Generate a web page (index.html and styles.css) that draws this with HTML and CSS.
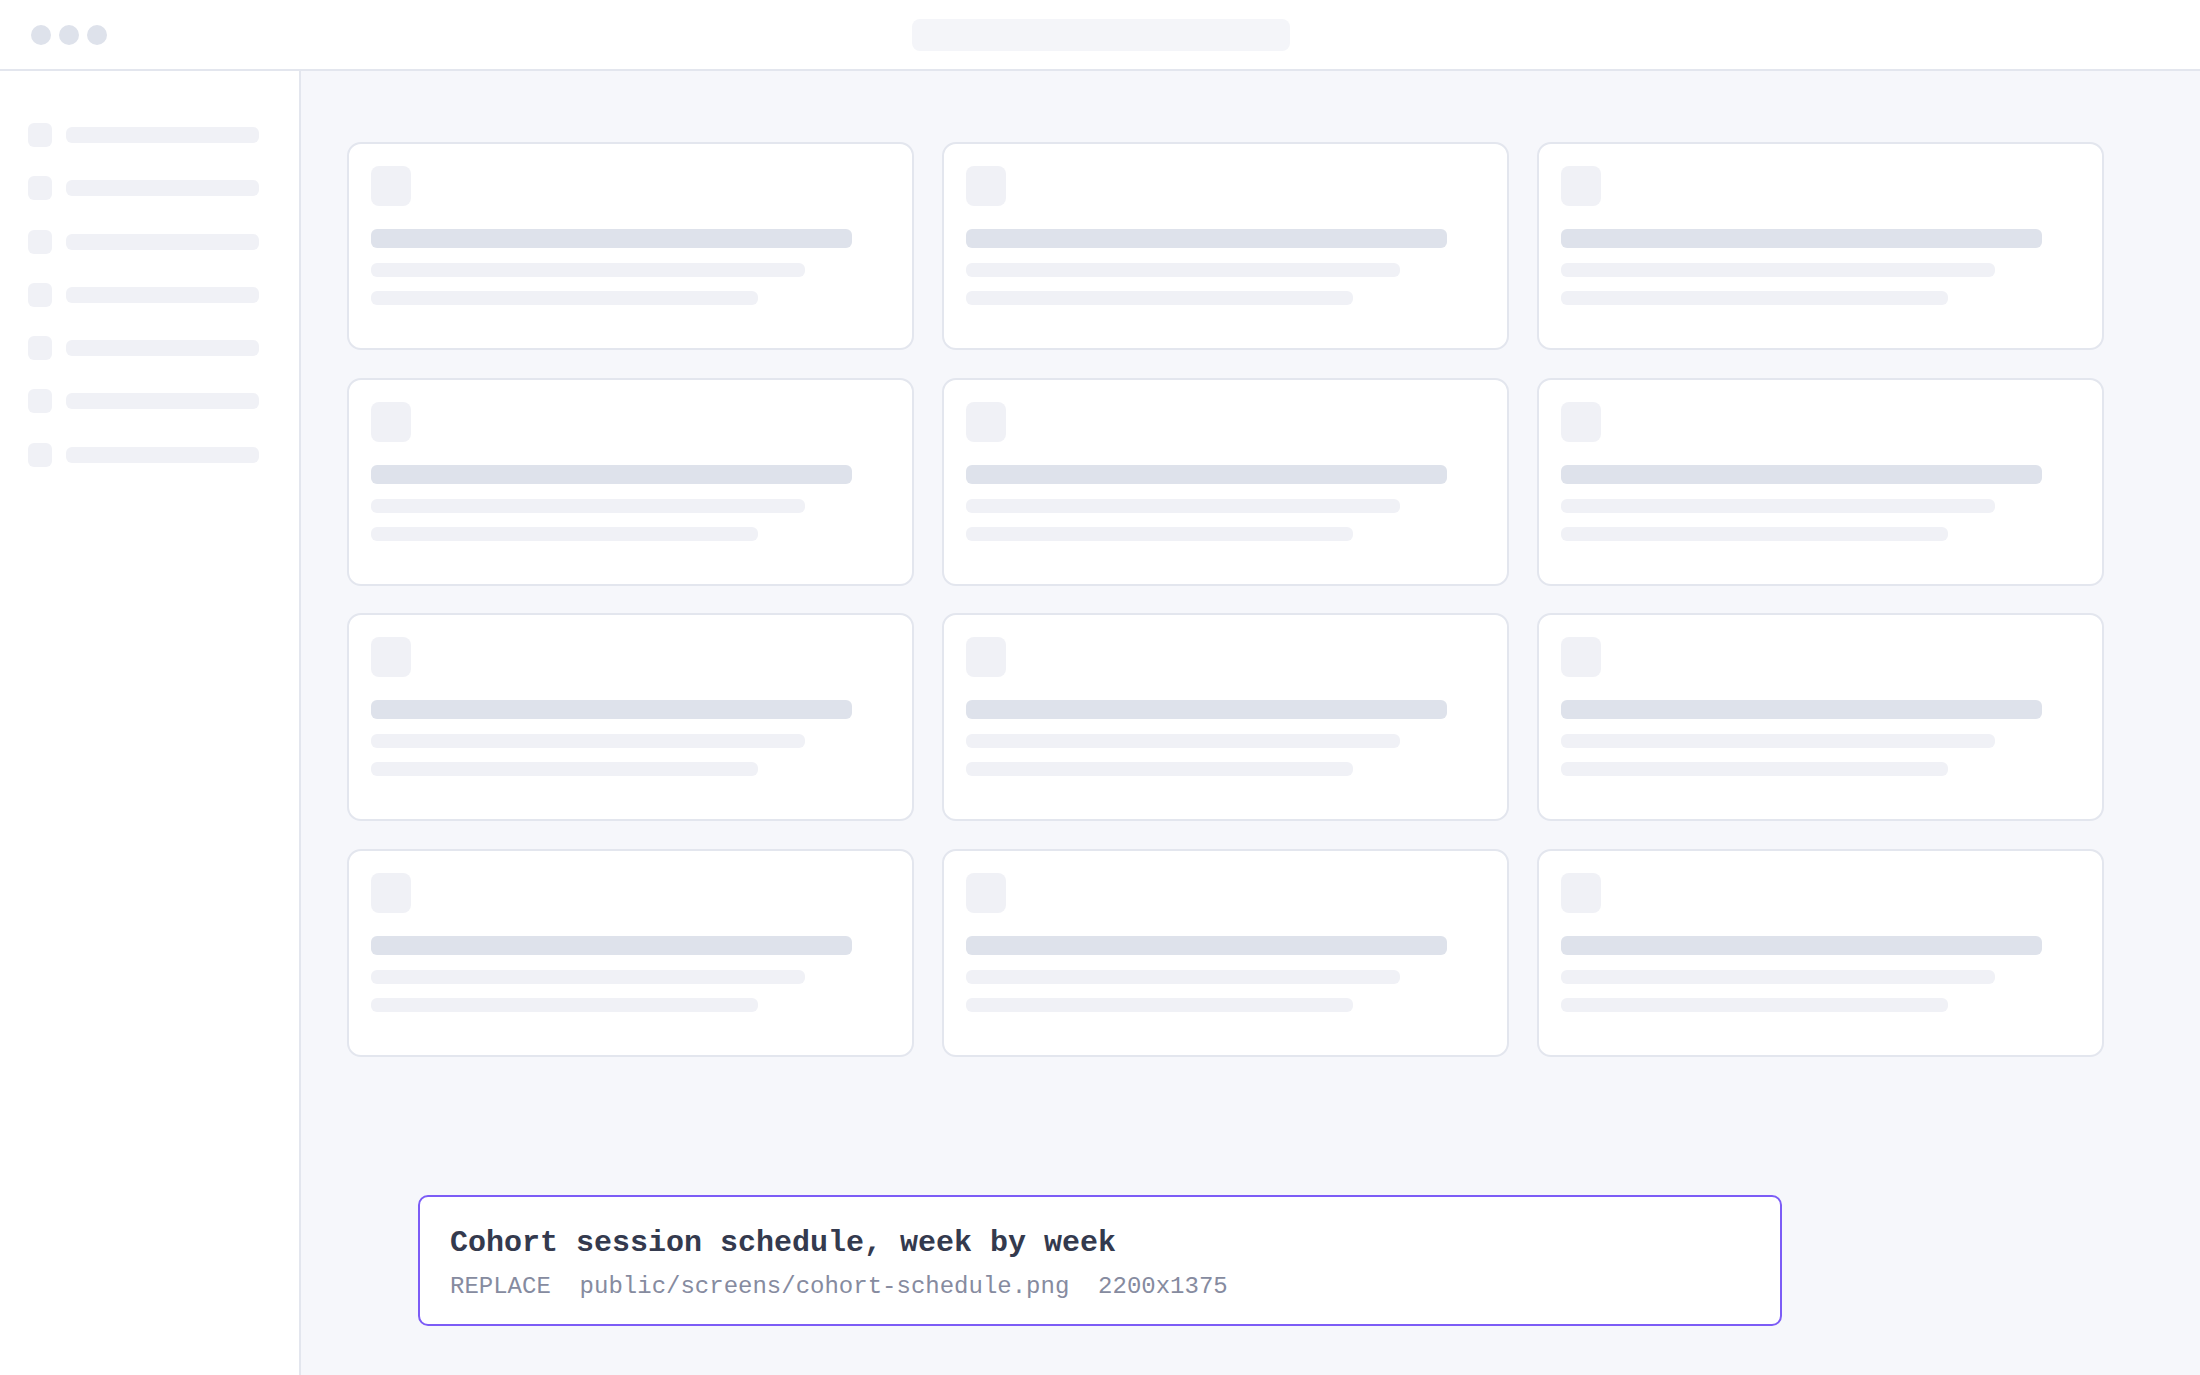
FILE: index.html
```html
<!DOCTYPE html>
<html lang="en">
<head>
  <meta charset="UTF-8">
  <title>Cohort session schedule</title>
  <link rel="stylesheet" href="styles.css">
</head>
<body>
  <header class="topbar">
    <div class="window-dots">
      <span class="dot"></span>
      <span class="dot"></span>
      <span class="dot"></span>
    </div>
    <div class="url-bar"></div>
    <div></div>
  </header>

  <div class="layout">
    <aside class="sidebar">
      <div class="nav-item"><span class="nav-icon"></span><span class="nav-label"></span></div>
      <div class="nav-item"><span class="nav-icon"></span><span class="nav-label"></span></div>
      <div class="nav-item"><span class="nav-icon"></span><span class="nav-label"></span></div>
      <div class="nav-item"><span class="nav-icon"></span><span class="nav-label"></span></div>
      <div class="nav-item"><span class="nav-icon"></span><span class="nav-label"></span></div>
      <div class="nav-item"><span class="nav-icon"></span><span class="nav-label"></span></div>
      <div class="nav-item"><span class="nav-icon"></span><span class="nav-label"></span></div>
    </aside>

    <main class="main">
      <div class="card-grid">
        <div class="card"><span class="card-icon"></span><span class="line line-title"></span><span class="line line-mid"></span><span class="line line-short"></span></div>
        <div class="card"><span class="card-icon"></span><span class="line line-title"></span><span class="line line-mid"></span><span class="line line-short"></span></div>
        <div class="card"><span class="card-icon"></span><span class="line line-title"></span><span class="line line-mid"></span><span class="line line-short"></span></div>
        <div class="card"><span class="card-icon"></span><span class="line line-title"></span><span class="line line-mid"></span><span class="line line-short"></span></div>
        <div class="card"><span class="card-icon"></span><span class="line line-title"></span><span class="line line-mid"></span><span class="line line-short"></span></div>
        <div class="card"><span class="card-icon"></span><span class="line line-title"></span><span class="line line-mid"></span><span class="line line-short"></span></div>
        <div class="card"><span class="card-icon"></span><span class="line line-title"></span><span class="line line-mid"></span><span class="line line-short"></span></div>
        <div class="card"><span class="card-icon"></span><span class="line line-title"></span><span class="line line-mid"></span><span class="line line-short"></span></div>
        <div class="card"><span class="card-icon"></span><span class="line line-title"></span><span class="line line-mid"></span><span class="line line-short"></span></div>
        <div class="card"><span class="card-icon"></span><span class="line line-title"></span><span class="line line-mid"></span><span class="line line-short"></span></div>
        <div class="card"><span class="card-icon"></span><span class="line line-title"></span><span class="line line-mid"></span><span class="line line-short"></span></div>
        <div class="card"><span class="card-icon"></span><span class="line line-title"></span><span class="line line-mid"></span><span class="line line-short"></span></div>
      </div>
    </main>
  </div>

  <div class="placeholder-note">
    <div class="note-title">Cohort session schedule, week by week</div>
    <div class="note-meta">REPLACE&nbsp;&nbsp;public/screens/cohort-schedule.png&nbsp;&nbsp;2200x1375</div>
  </div>
</body>
</html>
```

FILE: styles.css
```css
/* Skeleton screen placeholder */
:root {
  --page-bg: #f6f7fb;
  --panel-bg: #ffffff;
  --rule: #e3e6ee;
  --skeleton-strong: #dee2eb;
  --skeleton-soft: #f0f1f6;
  --accent: #7c5cf6;
  --ink: #343a4e;
  --ink-muted: #868b9f;
}

* {
  box-sizing: border-box;
}

body {
  margin: 0;
  height: 100vh;
  display: flex;
  flex-direction: column;
  background-color: var(--page-bg);
  font-family: "Liberation Mono", "DejaVu Sans Mono", monospace;
  overflow: hidden;
}

.topbar {
  height: 71px;
  flex-shrink: 0;
  display: grid;
  grid-template-columns: 1fr auto 1fr;
  align-items: center;
  background-color: var(--panel-bg);
  border-bottom: 2px solid var(--rule);
  padding-left: 31px;
}

.window-dots {
  display: flex;
  gap: 8px;
}

.dot {
  width: 20px;
  height: 20px;
  border-radius: 50%;
  background-color: var(--skeleton-strong);
}

.url-bar {
  width: 378px;
  height: 32px;
  border-radius: 8px;
  background-color: #f4f5f9;
  margin-left: -29px;
}

.layout {
  flex: 1;
  display: flex;
  min-height: 0;
}

.sidebar {
  width: 301px;
  flex-shrink: 0;
  background-color: var(--panel-bg);
  border-right: 2px solid var(--rule);
  padding: 52px 40px 0 28px;
  display: flex;
  flex-direction: column;
  gap: 29.3px;
}

.nav-item {
  display: flex;
  align-items: center;
  gap: 14px;
  height: 24px;
}

.nav-icon {
  width: 24px;
  height: 24px;
  border-radius: 6px;
  background-color: var(--skeleton-soft);
}

.nav-label {
  flex: 1;
  height: 16px;
  border-radius: 6px;
  background-color: var(--skeleton-soft);
}

.main {
  flex: 1;
  padding: 71px 46px 0 46px;
}

.card-grid {
  display: grid;
  grid-template-columns: repeat(3, 567px);
  grid-auto-rows: 208px;
  column-gap: 28px;
  row-gap: 27.7px;
}

.card {
  display: flex;
  flex-direction: column;
  align-items: flex-start;
  padding: 22px;
  background-color: var(--panel-bg);
  border: 2px solid var(--rule);
  border-radius: 14px;
}

.card-icon {
  width: 40px;
  height: 40px;
  border-radius: 8px;
  background-color: var(--skeleton-soft);
}

.line {
  display: block;
  height: 14px;
  border-radius: 6px;
  background-color: var(--skeleton-soft);
}

.line-title {
  width: 92.7%;
  height: 19px;
  margin-top: 23px;
  background-color: var(--skeleton-strong);
}

.line-mid {
  width: 83.6%;
  margin-top: 15px;
}

.line-short {
  width: 74.6%;
  margin-top: 14px;
}

.placeholder-note {
  position: fixed;
  left: 50%;
  bottom: 49px;
  transform: translateX(-50%);
  width: 62%;
  padding: 28px 30px 22px;
  background-color: var(--panel-bg);
  border: 2px solid var(--accent);
  border-radius: 10px;
}

.note-title {
  font-size: 30px;
  line-height: 36px;
  font-weight: 700;
  color: var(--ink);
}

.note-meta {
  margin-top: 11px;
  font-size: 24px;
  line-height: 30px;
  color: var(--ink-muted);
}
```
